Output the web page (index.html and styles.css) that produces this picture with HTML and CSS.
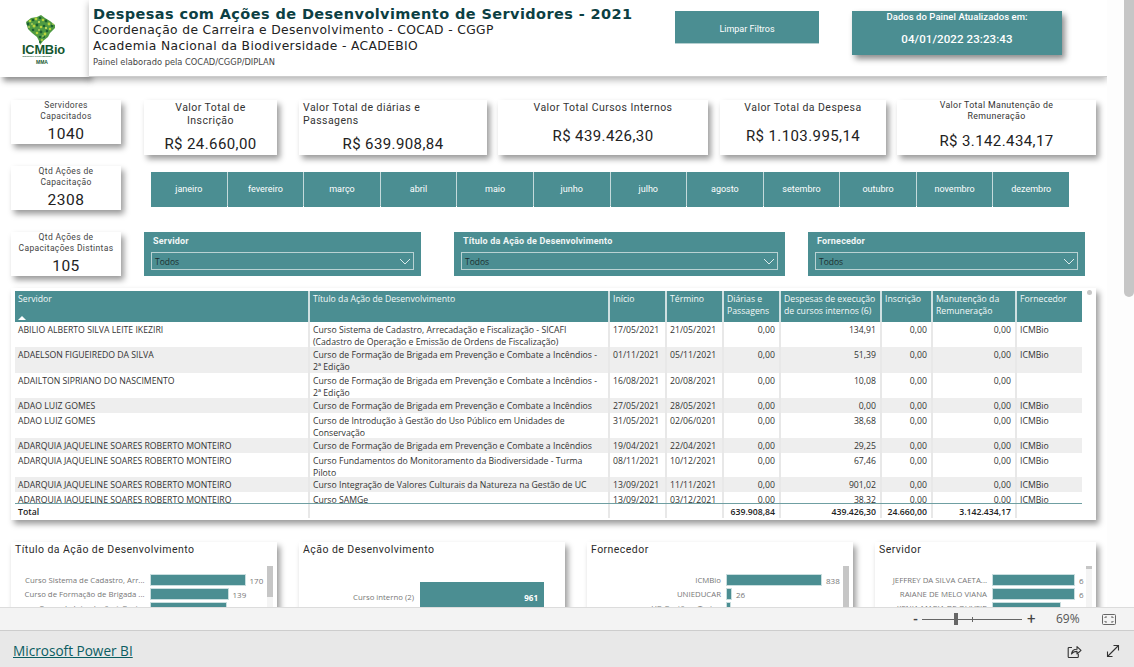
FILE: index.html
```html
<!DOCTYPE html>
<html lang="pt-BR">
<head>
<meta charset="utf-8">
<title>Despesas com Ações de Desenvolvimento de Servidores - 2021</title>
<link rel="stylesheet" href="styles.css">
</head>
<body>
<div class="main">
  <div class="canvas">
    <header class="top">
      <div class="logo">
        <svg width="89" height="72" viewBox="0 0 89 72" class="logo-svg">
          <path d="M26 22 L31 18 L37 17 L41 15 L45 18 L50 21 L55 25 L55 28 L50 33 L48 37 L43 41 L40 45 L39 41 L37 37 L32 33 L28 29 Z" fill="#4f9a42"/>
          <g fill="#1c6030">
            <circle cx="28" cy="24" r="1.400"/><circle cx="33" cy="20" r="1.300"/><circle cx="40" cy="18" r="1.300"/><circle cx="46" cy="21" r="1.400"/><circle cx="52" cy="26" r="1.300"/><circle cx="37" cy="25" r="1.400"/><circle cx="44" cy="26" r="1.300"/><circle cx="33" cy="30" r="1.300"/><circle cx="41" cy="32" r="1.400"/><circle cx="47" cy="31" r="1.300"/><circle cx="40" cy="37" r="1.300"/><circle cx="44" cy="37" r="1"/><circle cx="40" cy="42" r="1"/>
          </g>
          <g fill="#b9d53c">
            <circle cx="30" cy="21" r="1.300"/><circle cx="36" cy="19" r="1.400"/><circle cx="43" cy="20" r="1.300"/><circle cx="49" cy="24" r="1.400"/><circle cx="34" cy="26" r="1.500"/><circle cx="41" cy="27" r="1.300"/><circle cx="50" cy="29" r="1.200"/><circle cx="37" cy="33" r="1.300"/><circle cx="45" cy="34" r="1.400"/><circle cx="42" cy="40" r="1.100"/>
          </g>
          <g fill="#eef06a">
            <circle cx="32" cy="24" r=".8"/><circle cx="39" cy="22" r=".9"/><circle cx="46" cy="28" r=".9"/><circle cx="39" cy="30" r=".8"/><circle cx="53" cy="24" r=".7"/><circle cx="29" cy="27" r=".8"/><circle cx="43" cy="36" r=".7"/>
          </g>
          <text x="22" y="54" class="logo-main">ICMBio</text>
          <text x="22.500" y="57" class="logo-tiny">INSTITUTO CHICO MENDES</text>
          <text x="36" y="63.500" class="logo-mma">MMA</text>
        </svg>
      </div>
      <div class="title-panel">
        <div class="titles">
          <h1 class="title">Despesas com Ações de Desenvolvimento de Servidores - 2021</h1>
          <p class="subtitle">Coordenação de Carreira e Desenvolvimento - COCAD - CGGP</p>
          <p class="subtitle">Academia Nacional da Biodiversidade - ACADEBIO</p>
          <p class="credit">Painel elaborado pela COCAD/CGGP/DIPLAN</p>
        </div>
        <div class="clear-btn">Limpar Filtros</div>
        <div class="updated">
          <div class="updated-label">Dados do Painel Atualizados em:</div>
          <div class="updated-value">04/01/2022 23:23:43</div>
        </div>
      </div>
    </header>

    <section class="upper">
      <div class="minis">
        <div class="mini"><div class="mini-label">Servidores<br>Capacitados</div><div class="mini-value">1040</div></div>
        <div class="mini"><div class="mini-label">Qtd Ações de<br>Capacitação</div><div class="mini-value">2308</div></div>
        <div class="mini"><div class="mini-label">Qtd Ações de<br>Capacitações Distintas</div><div class="mini-value">105</div></div>
      </div>
      <div class="upper-right">
        <div class="kpis">
          <div class="kpi kpi-inscricao"><div class="kpi-label">Valor Total de<br>Inscrição</div><div class="kpi-value kpi-value-two">R$ 24.660,00</div></div>
          <div class="kpi kpi-diarias"><div class="kpi-label kpi-label-left">Valor Total de diárias e<br>Passagens</div><div class="kpi-value kpi-value-two">R$ 639.908,84</div></div>
          <div class="kpi kpi-cursos"><div class="kpi-label">Valor Total Cursos Internos</div><div class="kpi-value kpi-value-one">R$ 439.426,30</div></div>
          <div class="kpi kpi-despesa"><div class="kpi-label">Valor Total da Despesa</div><div class="kpi-value kpi-value-one">R$ 1.103.995,14</div></div>
          <div class="kpi kpi-manut"><div class="kpi-label kpi-label-small">Valor Total Manutenção de<br>Remuneração</div><div class="kpi-value kpi-value-small">R$ 3.142.434,17</div></div>
        </div>
        <nav class="months">
          <div class="month">janeiro</div><div class="month">fevereiro</div><div class="month">março</div><div class="month">abril</div><div class="month">maio</div><div class="month">junho</div><div class="month">julho</div><div class="month">agosto</div><div class="month">setembro</div><div class="month">outubro</div><div class="month">novembro</div><div class="month">dezembro</div>
        </nav>
        <div class="filters">
          <div class="filter filter-a"><div class="filter-title">Servidor</div><div class="select"><span>Todos</span><svg class="chev" width="12" height="7" viewBox="0 0 12 7"><path d="M1 1l5 5 5-5" fill="none" stroke="#dcebec" stroke-width="1"/></svg></div></div>
          <div class="filter filter-b"><div class="filter-title">Título da Ação de Desenvolvimento</div><div class="select"><span>Todos</span><svg class="chev" width="12" height="7" viewBox="0 0 12 7"><path d="M1 1l5 5 5-5" fill="none" stroke="#dcebec" stroke-width="1"/></svg></div></div>
          <div class="filter filter-c"><div class="filter-title">Fornecedor</div><div class="select"><span>Todos</span><svg class="chev" width="12" height="7" viewBox="0 0 12 7"><path d="M1 1l5 5 5-5" fill="none" stroke="#dcebec" stroke-width="1"/></svg></div></div>
        </div>
      </div>
    </section>

    <section class="table-card">
      <div class="row head">
        <div class="c">Servidor<svg class="sort" width="8" height="4" viewBox="0 0 8 4"><path d="M0 4 L4 0 L8 4Z" fill="#fff"/></svg></div>
        <div class="c">Título da Ação de Desenvolvimento</div>
        <div class="c">Início</div><div class="c">Término</div>
        <div class="c">Diárias e<br>Passagens</div>
        <div class="c">Despesas de execução<br>de cursos internos (6)</div>
        <div class="c">Inscrição</div>
        <div class="c">Manutenção da<br>Remuneração</div>
        <div class="c">Fornecedor</div>
      </div>
      <div class="rows">
        <div class="row tall">
          <div class="c">ABILIO ALBERTO SILVA LEITE IKEZIRI</div>
          <div class="c">Curso Sistema de Cadastro, Arrecadação e Fiscalização - SICAFI<br>(Cadastro de Operação e Emissão de Ordens de Fiscalização)</div>
          <div class="c">17/05/2021</div><div class="c">21/05/2021</div><div class="c n">0,00</div><div class="c n">134,91</div><div class="c n">0,00</div><div class="c n">0,00</div><div class="c">ICMBio</div>
        </div>
        <div class="row tall alt">
          <div class="c">ADAELSON FIGUEIREDO DA SILVA</div>
          <div class="c">Curso de Formação de Brigada em Prevenção e Combate a Incêndios -<br>2ª Edição</div>
          <div class="c">01/11/2021</div><div class="c">05/11/2021</div><div class="c n">0,00</div><div class="c n">51,39</div><div class="c n">0,00</div><div class="c n">0,00</div><div class="c">ICMBio</div>
        </div>
        <div class="row tall">
          <div class="c">ADAILTON SIPRIANO DO NASCIMENTO</div>
          <div class="c">Curso de Formação de Brigada em Prevenção e Combate a Incêndios -<br>2ª Edição</div>
          <div class="c">16/08/2021</div><div class="c">20/08/2021</div><div class="c n">0,00</div><div class="c n">10,08</div><div class="c n">0,00</div><div class="c n">0,00</div><div class="c"></div>
        </div>
        <div class="row alt">
          <div class="c">ADAO LUIZ GOMES</div>
          <div class="c">Curso de Formação de Brigada em Prevenção e Combate a Incêndios</div>
          <div class="c">27/05/2021</div><div class="c">28/05/2021</div><div class="c n">0,00</div><div class="c n">0,00</div><div class="c n">0,00</div><div class="c n">0,00</div><div class="c">ICMBio</div>
        </div>
        <div class="row tall">
          <div class="c">ADAO LUIZ GOMES</div>
          <div class="c">Curso de Introdução à Gestão do Uso Público em Unidades de<br>Conservação</div>
          <div class="c">31/05/2021</div><div class="c">02/06/0201</div><div class="c n">0,00</div><div class="c n">38,68</div><div class="c n">0,00</div><div class="c n">0,00</div><div class="c">ICMBio</div>
        </div>
        <div class="row alt">
          <div class="c">ADARQUIA JAQUELINE SOARES ROBERTO MONTEIRO</div>
          <div class="c">Curso de Formação de Brigada em Prevenção e Combate a Incêndios</div>
          <div class="c">19/04/2021</div><div class="c">22/04/2021</div><div class="c n">0,00</div><div class="c n">29,25</div><div class="c n">0,00</div><div class="c n">0,00</div><div class="c">ICMBio</div>
        </div>
        <div class="row tall tight">
          <div class="c">ADARQUIA JAQUELINE SOARES ROBERTO MONTEIRO</div>
          <div class="c">Curso Fundamentos do Monitoramento da Biodiversidade - Turma<br>Piloto</div>
          <div class="c">08/11/2021</div><div class="c">10/12/2021</div><div class="c n">0,00</div><div class="c n">67,46</div><div class="c n">0,00</div><div class="c n">0,00</div><div class="c">ICMBio</div>
        </div>
        <div class="row alt">
          <div class="c">ADARQUIA JAQUELINE SOARES ROBERTO MONTEIRO</div>
          <div class="c">Curso Integração de Valores Culturais da Natureza na Gestão de UC</div>
          <div class="c">13/09/2021</div><div class="c">11/11/2021</div><div class="c n">0,00</div><div class="c n">901,02</div><div class="c n">0,00</div><div class="c n">0,00</div><div class="c">ICMBio</div>
        </div>
        <div class="row">
          <div class="c">ADARQUIA JAQUELINE SOARES ROBERTO MONTEIRO</div>
          <div class="c">Curso SAMGe</div>
          <div class="c">13/09/2021</div><div class="c">03/12/2021</div><div class="c n">0,00</div><div class="c n">38,32</div><div class="c n">0,00</div><div class="c n">0,00</div><div class="c">ICMBio</div>
        </div>
      </div>
      <div class="row total">
        <div class="c">Total</div><div class="c"></div><div class="c"></div><div class="c"></div>
        <div class="c n">639.908,84</div><div class="c n">439.426,30</div><div class="c n">24.660,00</div><div class="c n">3.142.434,17</div><div class="c"></div>
      </div>
      <div class="table-dot"></div>
    </section>

    <section class="charts">
      <div class="chart chart-a">
        <h2 class="chart-title">Título da Ação de Desenvolvimento</h2>
        <div class="bars bars-a">
          <div class="bar-row"><span class="bar-label">Curso Sistema de Cadastro, Arr...</span><span class="bar" style="width:94px"></span><span class="bar-val">170</span></div>
          <div class="bar-row"><span class="bar-label">Curso de Formação de Brigada ...</span><span class="bar" style="width:77px"></span><span class="bar-val">139</span></div>
          <div class="bar-row"><span class="bar-label">Curso de Introdução à Gest...</span><span class="bar" style="width:75px"></span></div>
        </div>
        <div class="vscroll"><div class="vthumb vthumb-a"></div></div>
      </div>
      <div class="chart chart-b">
        <h2 class="chart-title">Ação de Desenvolvimento</h2>
        <div class="big-row"><span class="big-label">Curso interno (2)</span><div class="big-bar">961</div></div>
      </div>
      <div class="chart chart-c">
        <h2 class="chart-title">Fornecedor</h2>
        <div class="bars bars-c">
          <div class="bar-row"><span class="bar-label">ICMBio</span><span class="bar" style="width:94px"></span><span class="bar-val">838</span></div>
          <div class="bar-row"><span class="bar-label">UNIEDUCAR</span><span class="bar" style="width:4px"></span><span class="bar-val">26</span></div>
          <div class="bar-row"><span class="bar-label">VG Gestão e Treina</span><span class="bar" style="width:3px"></span></div>
        </div>
        <div class="vscroll"><div class="vthumb vthumb-c"></div></div>
      </div>
      <div class="chart chart-d">
        <h2 class="chart-title">Servidor</h2>
        <div class="bars bars-d">
          <div class="bar-row"><span class="bar-label">JEFFREY DA SILVA CAETA...</span><span class="bar" style="width:81px"></span><span class="bar-val">6</span></div>
          <div class="bar-row"><span class="bar-label">RAIANE DE MELO VIANA</span><span class="bar" style="width:81px"></span><span class="bar-val">6</span></div>
          <div class="bar-row"><span class="bar-label">KENIA MARIA DE OLIVEIR</span><span class="bar" style="width:67px"></span></div>
        </div>
        <div class="vscroll"><div class="vthumb vthumb-d"></div></div>
      </div>
    </section>
  </div>
  <div class="scrollbar"><div class="scroll-thumb"></div></div>
</div>

<div class="zoombar">
  <span class="zoom-minus">-</span>
  <div class="slider"><span class="slider-tick"></span><span class="slider-thumb"></span></div>
  <span class="zoom-plus">+</span>
  <span class="zoom-pct">69%</span>
  <svg class="fit-icon" width="14" height="11" viewBox="0 0 14 11"><rect x=".5" y=".5" width="13" height="10" rx="1" fill="none" stroke="#666"/><path d="M3 4V3h2M9 3h2v1M11 7v1H9M5 8H3V7" fill="none" stroke="#666"/></svg>
</div>

<footer class="footer">
  <a class="pbi-link" href="#">Microsoft Power BI</a>
  <svg class="share-icon" width="15" height="15" viewBox="0 0 15 15"><path d="M5 3.500H2a.8.8 0 0 0-.8.8v8.400c0 .5.3.8.8.8h8.500c.5 0 .8-.3.8-.8V10" fill="none" stroke="#333" stroke-width="1.100"/><path d="M4.500 10c.3-3 2.400-4.800 5.500-4.800V2.600l4 3.700-4 3.700V7.400c-2.400 0-4.200.7-5.500 2.600z" fill="none" stroke="#333" stroke-width="1.100" stroke-linejoin="round"/></svg>
  <svg class="expand-icon" width="14" height="14" viewBox="0 0 14 14"><path d="M1.500 12.500L12.500 1.500M7.500 1.500h5v5M1.500 7.500v5h5" fill="none" stroke="#333" stroke-width="1.100"/></svg>
</footer>
</body>
</html>
```

FILE: styles.css
```css
* { box-sizing: border-box; }
html, body { margin: 0; padding: 0; }
body {
  width: 1134px;
  height: 667px;
  overflow: hidden;
  background: #fff;
  font-family: "Open Sans", "Noto Sans", sans-serif;
  color: #333;
  display: flex;
  flex-direction: column;
}
h1, h2, p { margin: 0; font-weight: normal; }

.main { display: flex; height: 607px; overflow: hidden; background: #fdfdfd; }
.canvas { width: 1107px; height: 607px; overflow: hidden; background: #fff; flex: none; }
.scrollbar { flex: 1; padding-left: 17px; }
.scroll-thumb { width: 10px; height: 297px; background: #c6c6c6; border-radius: 0 0 5px 5px; }

/* header */
.top { display: flex; height: 77px; }
.logo { width: 89px; height: 77px; background: #fff; box-shadow: 3px 4px 6px rgba(0,0,0,.45); flex: none; position: relative; z-index: 1; }
.logo-svg { display: block; }
.logo-main { font: 700 12.800px "Liberation Sans", sans-serif; fill: #14572f; letter-spacing: -.2px; }
.logo-tiny { font: 700 2.200px "Liberation Sans", sans-serif; fill: #14572f; }
.logo-mma { font: 700 5px "Liberation Sans", sans-serif; fill: #14572f; }
.title-panel { flex: 1; display: flex; background: #fff; border-bottom: 1px solid #ccc; box-shadow: 0 3px 7px rgba(0,0,0,.3); position: relative; z-index: 2; padding-left: 4px; }
.titles { width: 582px; flex: none; font-family: "DejaVu Sans", sans-serif; }
.title { font-size: 14.500px; font-weight: 700; line-height: 16px; padding-top: 6px; color: #0c3f43; letter-spacing: .4px; white-space: nowrap; }
.subtitle { font-size: 12.300px; line-height: 16px; color: #222; letter-spacing: .36px; white-space: nowrap; }
.credit { font-size: 8.300px; line-height: 12px; margin-top: 2px; color: #444; white-space: nowrap; }
.clear-btn { width: 144px; height: 33px; margin-top: 11px; background: #4b8e92; color: #fff; font: 400 9px/36px Roboto, sans-serif; text-align: center; border-bottom: 1px solid #b5cfd0; }
.updated { width: 210px; height: 44px; margin: 11px 0 0 33px; background: #4b8e92; color: #fff; text-align: center; box-shadow: 3px 4px 6px rgba(0,0,0,.45); font-family: Roboto, sans-serif; }
.updated-label { font-size: 9.500px; font-weight: 500; line-height: 12px; letter-spacing: .05px; }
.updated-value { font-size: 11.500px; font-weight: 500; line-height: 16px; margin-top: 8px; letter-spacing: .1px; }

/* upper area */
.upper { display: flex; margin-top: 23px; padding-left: 11px; }
.minis { width: 110px; display: flex; flex-direction: column; gap: 22px; flex: none; }
.mini { height: 44px; background: #fff; box-shadow: 3px 4px 6px rgba(0,0,0,.4); text-align: center; font-family: Roboto, sans-serif; }
.mini-label { font-size: 8.500px; line-height: 11px; color: #444; letter-spacing: .35px; white-space: nowrap; }
.mini-value { font-size: 15.500px; line-height: 18px; margin-top: 3px; color: #222; letter-spacing: .5px; }
.upper-right { margin-left: 23px; }
.kpis { display: flex; height: 55px; }
.kpi { height: 55px; padding-top: 1px; background: #fff; box-shadow: 3px 4px 6px rgba(0,0,0,.4); text-align: center; font-family: Roboto, sans-serif; flex: none; }
.kpi-inscricao { width: 133px; }
.kpi-diarias { width: 188px; margin-left: 22px; }
.kpi-cursos { width: 210px; margin-left: 11px; }
.kpi-despesa { width: 166px; margin-left: 12px; }
.kpi-manut { width: 199px; margin-left: 11px; padding-top: 0; }
.kpi-label { font-size: 10.500px; line-height: 13px; color: #333; letter-spacing: .45px; white-space: nowrap; }
.kpi-label-left { text-align: left; padding-left: 4px; }
.kpi-label-small { font-size: 8.800px; line-height: 11px; letter-spacing: .35px; }
.kpi-value { font-size: 15px; line-height: 20px; color: #222; letter-spacing: .4px; white-space: nowrap; }
.kpi-value-two { margin-top: 7px; }
.kpi-value-one { margin-top: 12px; }
.kpi-value-small { margin-top: 9px; }

.months { display: grid; grid-template-columns: repeat(12, 1fr); width: 918px; height: 34px; margin: 17px 0 0 7px; column-gap: 1px; background: #c4dadb; border-bottom: 1px solid #b5cfd0; }
.month { background: #4b8e92; color: #fff; font: 400 9px/35px Roboto, sans-serif; text-align: center; }

.filters { display: flex; margin-top: 26px; height: 44px; }
.filter { height: 44px; background: #4b8e92; padding: 0 7px; flex: none; }
.filter-a { width: 277px; }
.filter-b { width: 331px; margin-left: 33px; }
.filter-c { width: 277px; margin-left: 23px; }
.filter-title { font: 700 9px/18px Roboto, sans-serif; color: #f0f6f6; padding-left: 2px; height: 20px; letter-spacing: .2px; }
.select { height: 18px; border: 1px solid #b9d2d3; display: flex; align-items: center; justify-content: space-between; padding: 0 2px 0 3px; font-size: 8.500px; color: #1d2f30; }
.chev { display: block; }

/* table */
.table-card { position: relative; width: 1085px; height: 232px; margin: 12px 0 0 11px; padding: 3px 14px 0 4px; background: #fff; box-shadow: 3px 4px 6px rgba(0,0,0,.4); font-size: 8.700px; color: #333; }
.row { display: grid; grid-template-columns: 295px 300px 57px 57px 57px 101px 51px 84px 65px; line-height: 12.300px; height: 14.600px; white-space: nowrap; }
.c { padding: 1.800px 4px 0 3px; border-right: 2px solid #e8e8e8; }
.c:last-child { border-right: 0; }
.n { text-align: right; }
.tall { height: 25.400px; }
.tall.tight { height: 24.400px; }
.alt { background: #eee; }
.head { height: 31px; background: #4b8e92; color: #f4f9f9; align-items: stretch; line-height: 12px; }
.head .c { border-right-color: #cfe0e1; position: relative; padding-top: 2px; }
.sort { position: absolute; left: 3px; bottom: 2px; display: block; }
.rows { height: 181px; overflow: hidden; }
.total { height: 14px; border-top: 1px solid #6f9fa2; font-weight: 600; line-height: 12px; color: #222; }
.table-dot { position: absolute; top: 2px; right: 4px; width: 5px; height: 5px; border-radius: 50%; background: #c6c6c6; }

/* charts */
.charts { display: flex; margin-top: 22px; padding-left: 11px; }
.chart { position: relative; height: 110px; background: #fff; box-shadow: 3px 4px 6px rgba(0,0,0,.4); flex: none; font-family: "Open Sans", sans-serif; }
.chart-a { width: 266px; }
.chart-b { width: 266px; margin-left: 22px; }
.chart-c { width: 266px; margin-left: 22px; }
.chart-d { width: 221px; margin-left: 22px; }
.chart-title { font: 400 10.500px/14px Roboto, sans-serif; color: #2b2b2b; letter-spacing: .45px; padding: 1px 0 0 4px; }
.bars { position: absolute; top: 33px; left: 0; right: 0; display: flex; flex-direction: column; gap: 4px; }
.bar-row { display: flex; align-items: center; height: 10px; font-size: 7.800px; color: #777; white-space: nowrap; }
.bar-label { flex: none; text-align: right; padding-right: 6px; overflow: hidden; }
.bars-a .bar-label { width: 139.500px; }
.bars-c .bar-label { width: 140px; }
.bars-d .bar-label { width: 118px; }
.bar { height: 10px; background: #4b8e92; flex: none; box-shadow: 0 0 0 1px #c9dedf; }
.bar-val { margin-left: 5px; font-size: 8px; color: #777; }
.vscroll { position: absolute; top: 24px; width: 6px; height: 90px; background: #f4f4f4; }
.chart-a .vscroll { left: 256px; }
.chart-c .vscroll { left: 256px; }
.chart-d .vscroll { left: 211px; }
.vthumb { background: #c6c6c6; width: 6px; }
.vthumb-a { height: 31px; }
.vthumb-c { height: 90px; }
.vthumb-d { height: 3px; }
.big-row { position: absolute; top: 40px; left: 0; display: flex; align-items: flex-start; }
.big-label { width: 115px; font-size: 7.800px; color: #777; text-align: right; padding-top: 10px; white-space: nowrap; }
.big-bar { width: 124px; height: 60px; margin-left: 6px; background: #4b8e92; color: #fff; font-size: 8px; font-weight: 700; text-align: right; padding: 10px 6px 0 0; }

/* zoom bar */
.zoombar { height: 23px; background: #f3f3f3; border-top: 1px solid #dcdcdc; display: flex; align-items: center; position: relative; color: #555; flex: none; padding-left: 913px; }
.zoom-minus { width: 9px; font: 700 13px/1 Roboto, sans-serif; color: #444; }
.slider { position: relative; width: 100px; height: 1px; background: #666; }
.slider-tick { position: absolute; left: 50px; top: -2px; width: 1px; height: 5px; background: #666; }
.slider-thumb { position: absolute; left: 32px; top: -5.500px; width: 4px; height: 12px; background: #666; }
.zoom-plus { margin-left: 5px; width: 29px; font: 400 15px/1 Roboto, sans-serif; color: #444; }
.zoom-pct { width: 46px; font: 400 12px/1 "Open Sans", sans-serif; color: #555; }
.fit-icon { display: block; }

/* footer */
.footer { height: 37px; background: #e8e8e8; border-top: 1px solid #cdcdcd; display: flex; align-items: center; padding: 4px 0 0 13px; flex: none; }
.pbi-link { font: 500 13.600px/1.2 "Open Sans", sans-serif; color: #0b5d62; text-decoration: underline; width: 1054px; flex: none; }
.share-icon { display: block; flex: none; margin-right: 24px; }
.expand-icon { display: block; flex: none; }
```
